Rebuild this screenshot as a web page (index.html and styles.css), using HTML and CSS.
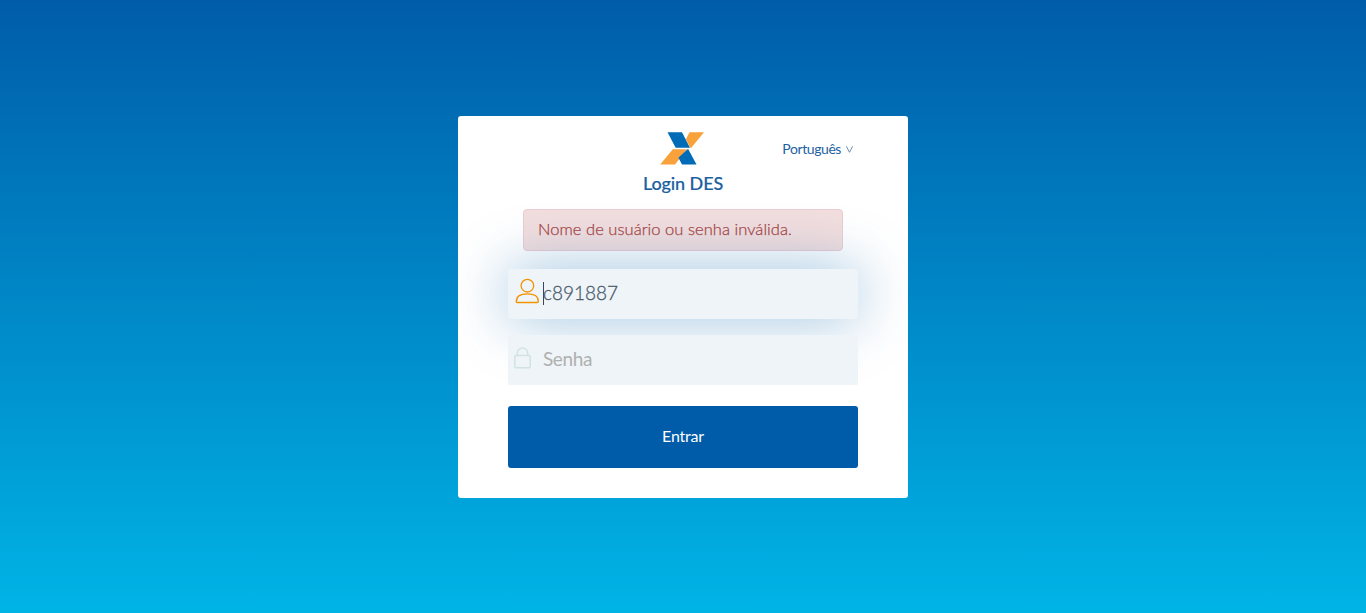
FILE: index.html
```html
<!DOCTYPE html>
<html lang="pt-BR">
<head>
<meta charset="utf-8">
<title>Login DES</title>
<link rel="stylesheet" href="styles.css">
</head>
<body>
<main class="card">
  <header class="header">
    <svg class="logo" width="44" height="33" viewBox="0 0 44 33" aria-hidden="true">
      <path fill="#006bb7" d="M7.5.3H22L30 15.8H15.7z"/>
      <path fill="#f9a13a" d="M29.5.3H44L31.3 15.8h-1L25.9 7.3z"/>
      <path fill="#f9a13a" d="M12.8 17.2h14L15 32.5H.2z"/>
      <path fill="#006bb7" d="M27.5 17.2h.8l8.2 15.3H22l-3.6-6.8z"/>
    </svg>
    <h1 class="title">Login DES</h1>
    <a class="language"><span>Português</span>
      <svg width="7" height="7" viewBox="0 0 7 7" aria-hidden="true"><path d="M.4.3l3.1 6 3.1-6" fill="none" stroke="#49749e" stroke-width=".8"/></svg>
    </a>
  </header>
  <div class="alert"><span>Nome de usuário ou senha inválida.</span></div>
  <form class="form">
    <div class="field focused">
      <svg class="user" width="24" height="26" viewBox="0 0 24 26" aria-hidden="true">
        <g fill="none" stroke="#f39200" stroke-width="1.3">
          <circle cx="12.4" cy="7.7" r="6.3"/>
          <path d="M1.3 23.4C1.3 18 5.4 15.8 12.3 15.8s11 2.2 11 7.6c0 .8-.3 1.1-.9 1.1H2.2c-.6 0-.9-.3-.9-1.1z"/>
        </g>
      </svg>
      <i class="caret"></i><span class="value">c891887</span>
    </div>
    <div class="field">
      <svg class="lock" width="17" height="22" viewBox="0 0 17 22" aria-hidden="true">
        <g fill="none" stroke="#d1e2e2" stroke-width="1.5">
          <rect x=".8" y="8.4" width="15.4" height="12.3" rx="1"/>
          <path d="M3.3 8.4V6.2a5.2 5.2 0 0 1 10.4 0v2.2"/>
        </g>
      </svg>
      <span class="placeholder">Senha</span>
    </div>
    <button class="submit" type="button">Entrar</button>
  </form>
</main>
</body>
</html>
```
FILE: styles.css
```css
* { box-sizing: border-box; }
body {
  margin: 0;
  height: 613px;
  padding-top: 116px;
  overflow: hidden;
  background: linear-gradient(#005ca9, #00b4e6);
  font-family: Lato, sans-serif;
}
.card {
  width: 450px;
  height: 382px;
  margin: 0 auto;
  padding: 16px 50px 0;
  background: #fff;
  border-radius: 3px;
  overflow: hidden;
}
.header {
  position: relative;
  height: 77px;
  display: flex;
  flex-direction: column;
  align-items: center;
}
.logo { display: block; margin-right: 2px; }
.title {
  margin: 6px 0 0;
  font-size: 18px;
  line-height: 24px;
  font-weight: 500;
  color: #1d5f9f;
  letter-spacing: -.1px;
  -webkit-text-stroke: .2px #1d5f9f;
}
.language {
  position: absolute;
  right: 5px;
  top: 8px;
  display: flex;
  align-items: center;
  gap: 5px;
  font-size: 14px;
  line-height: 18px;
  letter-spacing: -.42px;
  color: #1d5f9f;
}
.alert {
  width: 320px;
  height: 42px;
  margin: 0 auto;
  padding: 0 14px 3px;
  display: flex;
  align-items: center;
  border: 1px solid #ebccd1;
  border-radius: 4px;
  background: #f2dede;
  color: #a94442;
  font-size: 16.5px;
  font-weight: 300;
  letter-spacing: .05px;
  white-space: nowrap;
  -webkit-text-stroke: .25px #a94442;
}
.form { margin-top: 18px; }
.field {
  height: 50px;
  margin-bottom: 16px;
  display: flex;
  align-items: flex-start;
  border-radius: 2px;
  background: #eef4f7;
  font-size: 19px;
  line-height: 24px;
  position: relative;
}
.focused { box-shadow: 0 0 60px rgba(0, 98, 170, .4); }
.user { margin: 9px 0 0 7px; }
.lock { margin: 12px 12px 0 6px; }
.caret {
  width: 1px;
  height: 23px;
  margin: 13px -1px 0 4px;
  background: #34495e;
}
.value {
  margin-top: 12px;
  color: #4b5b6d;
  font-weight: 300;
  -webkit-text-stroke: .3px #4b5b6d;
}
.placeholder { margin-top: 12px; color: #b0b0b0; letter-spacing: -.4px; }
.submit {
  display: block;
  width: 350px;
  height: 62px;
  margin-top: 21px;
  padding: 0 0 3px;
  border: 0;
  border-radius: 3px;
  background: #005ca9;
  color: #fff;
  font: 16px Lato, sans-serif;
  letter-spacing: -.2px;
}
```
